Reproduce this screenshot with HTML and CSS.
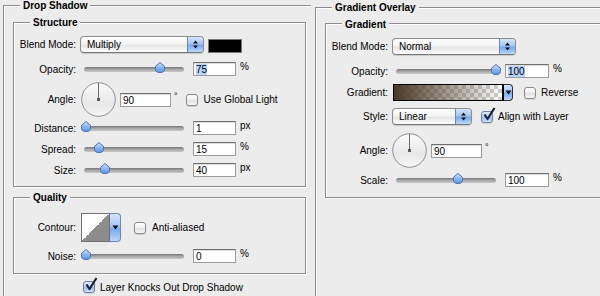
FILE: index.html
```html
<!DOCTYPE html>
<html lang="en">
  <head>
    <meta charset="UTF-8" />
    <title>Layer Style</title>
    <link rel="stylesheet" href="styles.css">
  </head>
  <body>
    <svg class="defs" width="0" height="0">
      <defs>
        <linearGradient id="thumbFill" x1="0" y1="0" x2="0" y2="1">
          <stop offset="0" stop-color="#d9e8fb" />
          <stop offset="0.5" stop-color="#8db7f0" />
          <stop offset="1" stop-color="#5f95e3" />
        </linearGradient>
        <linearGradient id="dialFill" x1="0" y1="0" x2="0" y2="1">
          <stop offset="0" stop-color="#fbfbfb" />
          <stop offset="0.6" stop-color="#e8e8e8" />
          <stop offset="1" stop-color="#f6f6f6" />
        </linearGradient>
      </defs>
    </svg>

    <!-- Drop Shadow -->
    <div class="panel panel-left">
      <div class="group group-outer drop-shadow">
        <span class="group-title">Drop Shadow</span>

        <div class="group group-inner structure">
          <span class="group-title">Structure</span>

          <div class="row row-select">
            <span class="label">Blend Mode:</span>
            <div class="popup popup-wide">
              <span class="popup-text">Multiply</span>
              <span class="stepper">
                <svg width="7" height="11" viewBox="0 0 7 11"><path d="M3.5 1.5 6 4.5H1z M1 6.5h5L3.5 9.5z" fill="#111"/></svg>
              </span>
            </div>
            <span class="swatch"></span>
          </div>

          <div class="row after-select">
            <span class="label">Opacity:</span>
            <div class="slider">
              <svg class="thumb" style="left: 76px" width="10" height="11" viewBox="0 0 10 11"><path d="M5 .5 9.5 4.3V7.5Q9.5 10.5 5 10.5 .5 10.5 .5 7.5V4.3z" fill="url(#thumbFill)" stroke="#4f6fae"/></svg>
            </div>
            <span class="field"><span class="selected">75</span></span>
            <span class="unit">%</span>
          </div>

          <div class="row row-dial">
            <span class="label">Angle:</span>
            <svg class="dial" width="35" height="35" viewBox="0 0 35 35">
              <circle cx="17.5" cy="17.5" r="16.8" fill="url(#dialFill)" stroke="#8f8f8f" />
              <line x1="17.5" y1="17.5" x2="17.5" y2="1" stroke="#6b6b6b" />
              <rect x="16" y="16" width="3" height="3" fill="#5c5c5c" />
            </svg>
            <span class="field field-angle">90</span>
            <span class="degree">°</span>
            <span class="check check-global"></span>
            <span class="check-text">Use Global Light</span>
          </div>

          <div class="row after-dial">
            <span class="label">Distance:</span>
            <div class="slider">
              <svg class="thumb" style="left: 2px" width="10" height="11" viewBox="0 0 10 11"><path d="M5 .5 9.5 4.3V7.5Q9.5 10.5 5 10.5 .5 10.5 .5 7.5V4.3z" fill="url(#thumbFill)" stroke="#4f6fae"/></svg>
            </div>
            <span class="field">1</span>
            <span class="unit">px</span>
          </div>

          <div class="row">
            <span class="label">Spread:</span>
            <div class="slider">
              <svg class="thumb" style="left: 15px" width="10" height="11" viewBox="0 0 10 11"><path d="M5 .5 9.5 4.3V7.5Q9.5 10.5 5 10.5 .5 10.5 .5 7.5V4.3z" fill="url(#thumbFill)" stroke="#4f6fae"/></svg>
            </div>
            <span class="field">15</span>
            <span class="unit">%</span>
          </div>

          <div class="row">
            <span class="label">Size:</span>
            <div class="slider">
              <svg class="thumb" style="left: 21px" width="10" height="11" viewBox="0 0 10 11"><path d="M5 .5 9.5 4.3V7.5Q9.5 10.5 5 10.5 .5 10.5 .5 7.5V4.3z" fill="url(#thumbFill)" stroke="#4f6fae"/></svg>
            </div>
            <span class="field">40</span>
            <span class="unit">px</span>
          </div>
        </div>

        <div class="group group-inner quality">
          <span class="group-title">Quality</span>

          <div class="row row-contour">
            <span class="label">Contour:</span>
            <div class="contour">
              <span class="contour-curve"></span>
              <span class="dropdown">
                <svg width="7" height="5" viewBox="0 0 7 5"><path d="M.5 .5h6L3.5 4.5z" fill="#111"/></svg>
              </span>
            </div>
            <span class="check check-aa"></span>
            <span class="check-text">Anti-aliased</span>
          </div>

          <div class="row">
            <span class="label">Noise:</span>
            <div class="slider">
              <svg class="thumb" style="left: 2px" width="10" height="11" viewBox="0 0 10 11"><path d="M5 .5 9.5 4.3V7.5Q9.5 10.5 5 10.5 .5 10.5 .5 7.5V4.3z" fill="url(#thumbFill)" stroke="#4f6fae"/></svg>
            </div>
            <span class="field">0</span>
            <span class="unit">%</span>
          </div>
        </div>

        <div class="row row-knocks">
          <span class="check checked">
            <svg width="14" height="15" viewBox="0 0 14 15"><path d="M2.5 7.5 5.5 12 12.5 1" fill="none" stroke="#1d2433" stroke-width="2.2" stroke-linejoin="round"/></svg>
          </span>
          <span class="check-text">Layer Knocks Out Drop Shadow</span>
        </div>
      </div>
    </div>

    <!-- Gradient Overlay -->
    <div class="panel panel-right">
      <div class="group group-outer overlay">
        <span class="group-title">Gradient Overlay</span>

        <div class="group group-inner gradient">
          <span class="group-title">Gradient</span>

          <div class="row row-select">
            <span class="label">Blend Mode:</span>
            <div class="popup popup-wide">
              <span class="popup-text">Normal</span>
              <span class="stepper">
                <svg width="7" height="11" viewBox="0 0 7 11"><path d="M3.5 1.5 6 4.5H1z M1 6.5h5L3.5 9.5z" fill="#111"/></svg>
              </span>
            </div>
          </div>

          <div class="row after-select">
            <span class="label">Opacity:</span>
            <div class="slider">
              <svg class="thumb" style="left: 100px" width="10" height="11" viewBox="0 0 10 11"><path d="M5 .5 9.5 4.3V7.5Q9.5 10.5 5 10.5 .5 10.5 .5 7.5V4.3z" fill="url(#thumbFill)" stroke="#4f6fae"/></svg>
            </div>
            <span class="field field-wide"><span class="selected">100</span></span>
            <span class="unit">%</span>
          </div>

          <div class="row row-gradient">
            <span class="label">Gradient:</span>
            <div class="gradient-picker">
              <span class="gradient-ramp"></span>
              <span class="dropdown">
                <svg width="7" height="5" viewBox="0 0 7 5"><path d="M.5 .5h6L3.5 4.5z" fill="#111"/></svg>
              </span>
            </div>
            <span class="check check-reverse"></span>
            <span class="check-text">Reverse</span>
          </div>

          <div class="row row-select row-style">
            <span class="label">Style:</span>
            <div class="popup popup-short">
              <span class="popup-text">Linear</span>
              <span class="stepper">
                <svg width="7" height="11" viewBox="0 0 7 11"><path d="M3.5 1.5 6 4.5H1z M1 6.5h5L3.5 9.5z" fill="#111"/></svg>
              </span>
            </div>
            <span class="check checked check-align">
              <svg width="14" height="15" viewBox="0 0 14 15"><path d="M2.5 7.5 5.5 12 12.5 1" fill="none" stroke="#1d2433" stroke-width="2.2" stroke-linejoin="round"/></svg>
            </span>
            <span class="check-text">Align with Layer</span>
          </div>

          <div class="row row-dial row-dial-right">
            <span class="label">Angle:</span>
            <svg class="dial" width="35" height="35" viewBox="0 0 35 35">
              <circle cx="17.5" cy="17.5" r="16.8" fill="url(#dialFill)" stroke="#8f8f8f" />
              <line x1="17.5" y1="17.5" x2="17.5" y2="1" stroke="#6b6b6b" />
              <rect x="16" y="16" width="3" height="3" fill="#5c5c5c" />
            </svg>
            <span class="field field-angle">90</span>
            <span class="degree">°</span>
          </div>

          <div class="row after-dial-right">
            <span class="label">Scale:</span>
            <div class="slider">
              <svg class="thumb" style="left: 62px" width="10" height="11" viewBox="0 0 10 11"><path d="M5 .5 9.5 4.3V7.5Q9.5 10.5 5 10.5 .5 10.5 .5 7.5V4.3z" fill="url(#thumbFill)" stroke="#4f6fae"/></svg>
            </div>
            <span class="field field-wide">100</span>
            <span class="unit">%</span>
          </div>
        </div>
      </div>
    </div>
  </body>
</html>
```

FILE: styles.css
```css
* {
  box-sizing: border-box;
}
html,
body {
  margin: 0;
  height: 296px;
  overflow: hidden;
}
body {
  display: flex;
  background-color: #ececec;
  font-family: "Liberation Sans", Arial, sans-serif;
  font-size: 10px;
  color: #000;
}
.defs {
  position: absolute;
}
.panel-left {
  width: 313px;
  flex: none;
}
.panel-right {
  flex: 1;
  overflow: hidden;
}

/* etched group boxes */
.group {
  border: 1px solid #8c8c8c;
  box-shadow: 1px 1px 0 #fff, inset 1px 1px 0 #fff;
}
.group-outer {
  border-right: none;
  border-bottom: none;
  box-shadow: inset 1px 1px 0 #fff;
}
.drop-shadow {
  height: 291px;
  margin: 5px 0 0 3px;
  width: 308px;
}
.overlay {
  height: 289px;
  margin: 7px 0 0 2px;
  width: 285px;
}
.group-title {
  display: block;
  width: max-content;
  margin: -7px 0 0 16px;
  padding: 0 3px;
  line-height: 13px;
  font-weight: bold;
  background-color: #ececec;
}
.group-inner {
  margin: 10px 0 0 9px;
  padding-bottom: 9px;
}
.structure,
.quality {
  width: 293px;
}
.quality {
  padding-bottom: 10px;
}
.gradient {
  width: 280px;
  margin-top: 9px;
  padding-top: 1px;
  padding-bottom: 10px;
}

/* rows */
.row {
  display: flex;
  align-items: center;
  height: 14px;
  margin-top: 7px;
}
.row-select {
  height: 17px;
}
.row.after-select {
  margin-top: 9px;
}
.row-dial {
  height: 35px;
  margin-top: 6px;
}
.row.after-dial {
  margin-top: 4px;
}
.row-dial-right {
  margin-top: 8px;
}
.row.after-dial-right {
  margin-top: 5px;
}
.row-gradient {
  height: 17px;
  margin-top: 6px;
}
.row-contour {
  height: 29px;
  margin-top: 9px;
}
.row-knocks {
  margin: 6px 0 0 79px;
}
.label {
  width: 62px;
  flex: none;
  text-align: right;
}

/* popup menus */
.popup {
  display: flex;
  height: 17px;
  margin-left: 4px;
  border: 1px solid #8d8d8d;
  border-bottom-color: #777;
  border-radius: 4px;
  overflow: hidden;
  background: linear-gradient(#fff, #f4f4f4 45%, #e6e6e6 55%, #fbfbfb);
  box-shadow: 0 1px 1px rgba(0, 0, 0, 0.15);
}
.popup-wide {
  width: 124px;
}
.popup-short {
  width: 80px;
}
.popup-text {
  flex: 1;
  padding-left: 6px;
  line-height: 15px;
}
.stepper {
  width: 16px;
  display: flex;
  align-items: center;
  justify-content: center;
  border-left: 1px solid #6f86b5;
  background: linear-gradient(#d6e6fb, #a4c6f3 45%, #7aaaee 55%, #b9d7fb);
}
.swatch {
  width: 34px;
  height: 14px;
  margin: 3px 0 0 4px;
  border: 1px solid #7b7b7b;
  background-color: #000;
}

/* sliders */
.slider {
  position: relative;
  width: 100px;
  height: 5px;
  margin-left: 8px;
  border-radius: 3px;
  background: linear-gradient(#767676, #a6a6a6 45%, #cacaca);
}
.thumb {
  position: absolute;
  top: -5px;
  margin-left: -5px;
}

/* text fields */
.field {
  width: 43px;
  height: 14px;
  margin-left: 9px;
  padding-left: 2px;
  line-height: 13px;
  border: 1px solid #9c9c9c;
  border-top-color: #6e6e6e;
  background-color: #fff;
  box-shadow: inset 0 1px 0 #dcdcdc;
}
.field-wide {
  width: 44px;
}
.field-angle {
  width: 51px;
  margin-left: 4px;
}
.selected {
  background-color: #b5d5ff;
}
.unit {
  margin-left: 4px;
  align-self: flex-start;
  line-height: 10px;
}
.degree {
  margin-left: 3px;
  align-self: flex-start;
  margin-top: 10px;
  font-size: 9px;
  line-height: 9px;
}
.dial {
  margin-left: 5px;
  flex: none;
}
.row-dial-right .dial {
  margin-left: 4px;
}

/* checkboxes */
.check {
  position: relative;
  width: 12px;
  height: 12px;
  flex: none;
  border: 1px solid #8b8b8b;
  border-radius: 3px;
  background: linear-gradient(#fff, #f0f0f0 50%, #e2e2e2 55%, #f8f8f8);
  box-shadow: 0 1px 1px rgba(0, 0, 0, 0.12);
}
.check.checked {
  border-color: #6d7fa6;
  background: linear-gradient(#dbe8fa, #b3cdf2 50%, #98bcee 55%, #d1e4fb);
}
.check svg {
  position: absolute;
  left: 0;
  top: -5px;
}
.check-text {
  margin-left: 6px;
}
.check-global {
  margin-left: 8px;
}
.check-aa {
  margin-left: 13px;
}
.check-reverse {
  margin-left: 11px;
}
.check-align {
  margin-left: 9px;
}
.row-knocks .check-text,
.check-reverse + .check-text,
.check-align + .check-text {
  margin-left: 5px;
}

/* contour and gradient pickers */
.contour {
  display: flex;
  height: 29px;
  margin-left: 5px;
}
.contour-curve {
  width: 29px;
  border: 1px solid #6f6f6f;
  background: linear-gradient(to top left, #8c8c8c 50%, #fff 50%);
}
.dropdown {
  width: 11px;
  display: flex;
  align-items: center;
  justify-content: center;
  border: 1px solid #6f86b5;
  border-left: none;
  border-radius: 0 4px 4px 0;
  background: linear-gradient(#d6e6fb, #a4c6f3 45%, #7aaaee 55%, #b9d7fb);
}
.gradient-picker {
  display: flex;
  height: 17px;
  margin-left: 5px;
}
.gradient-ramp {
  width: 111px;
  border: 1px solid #000;
  border-right-width: 2px;
  background:
    linear-gradient(to right, #4a3924, rgba(74, 57, 36, 0)),
    conic-gradient(#cfcfcf 25%, #fff 0 50%, #cfcfcf 0 75%, #fff 0) 0 0 / 8px 8px;
}
.gradient-picker .dropdown {
  width: 9px;
  border-color: #333;
}
```
